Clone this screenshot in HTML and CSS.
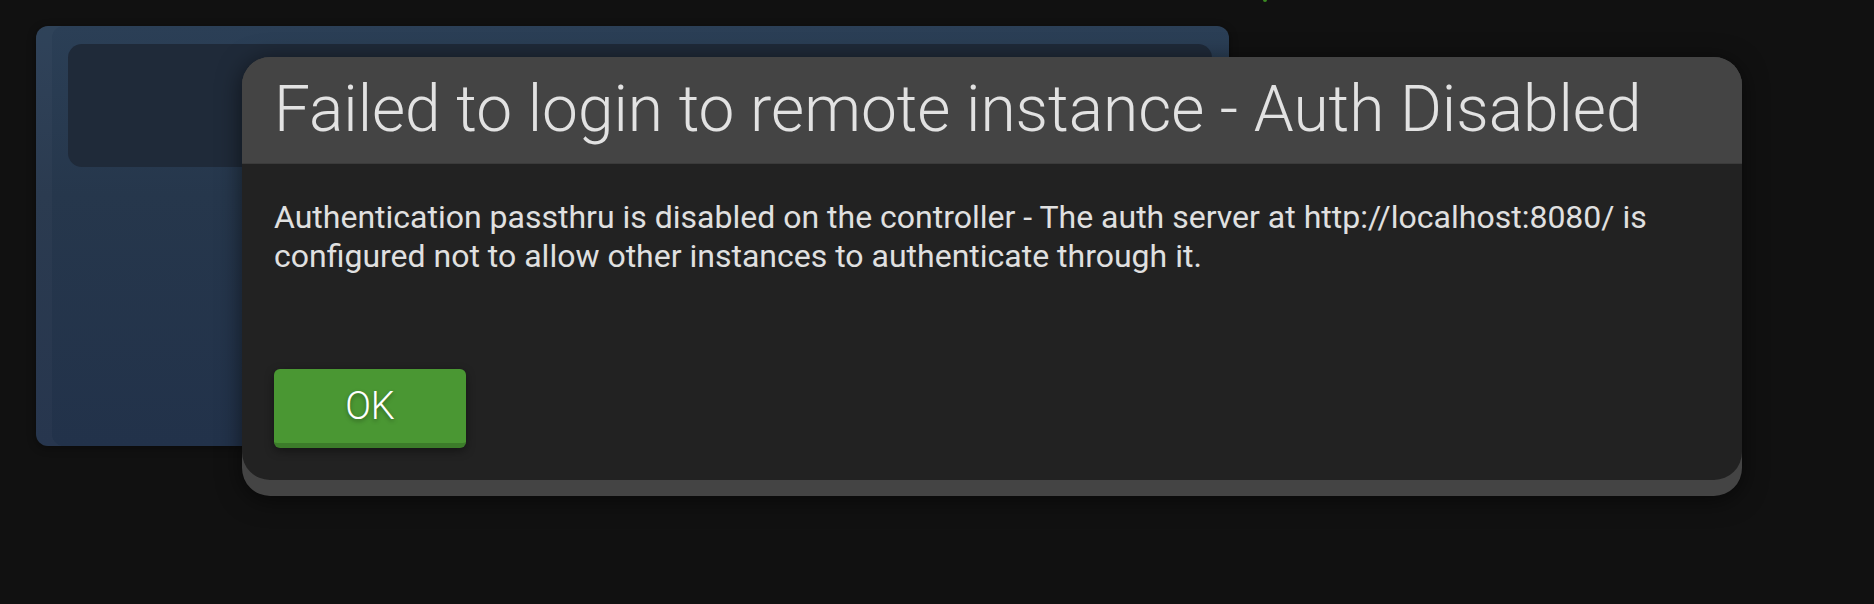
FILE: index.html
```html
<!DOCTYPE html>
<html lang="en">
<head>
<meta charset="utf-8">
<title>Auth Disabled</title>
<link rel="stylesheet" href="styles.css">
</head>
<body>
  <div class="stage">
    <div class="back-panel">
      <div class="back-inner"></div>
    </div>
    <span class="status-dot"></span>
    <div class="dialog" role="dialog">
      <div class="dialog-header">
        <h1 class="dialog-title">Failed to login to remote instance - Auth Disabled</h1>
      </div>
      <div class="dialog-body">
        <p class="dialog-message">Authentication passthru is disabled on the controller - The auth server at http://localhost:8080/ is configured not to allow other instances to authenticate through it.</p>
        <button class="btn-ok" type="button">OK</button>
      </div>
    </div>
  </div>
</body>
</html>
```

FILE: styles.css
```css
* { box-sizing: border-box; }

html, body {
  margin: 0;
  padding: 0;
  background: #111111;
  font-family: Roboto, "Noto Sans", "Liberation Sans", sans-serif;
  overflow: hidden;
}

.stage {
  position: relative;
  width: 1874px;
  height: 604px;
  padding: 26px 0 0 36px;
}

.back-panel {
  width: 1193px;
  height: 420px;
  border-radius: 12px;
  background: linear-gradient(180deg, #2b3f56 0%, #26374c 40%, #22324a 100%);
  box-shadow: inset 16px 0 0 rgba(255, 255, 255, 0.025), 0 2px 8px rgba(0, 0, 0, 0.4);
  padding: 18px 17px 0 32px;
}

.back-inner {
  height: 123px;
  border-radius: 14px;
  background: #1f2a39;
}

.status-dot {
  position: absolute;
  left: 1263px;
  top: -2px;
  width: 4px;
  height: 4px;
  border-radius: 50%;
  background: #3a8a22;
}

.dialog {
  position: absolute;
  left: 242px;
  top: 57px;
  width: 1500px;
  background: #444444;
  border-radius: 28px;
  padding-bottom: 16px;
  overflow: hidden;
  box-shadow: 0 4px 24px rgba(0, 0, 0, 0.55);
}

.dialog-header {
  padding: 16px 32px;
  border-bottom: 1px solid #3b3b3b;
  background: #444444;
}

.dialog-title {
  margin: 0;
  font-family: Roboto, "Noto Sans", sans-serif;
  font-weight: 300;
  font-size: 64px;
  line-height: 74px;
  color: #e2e2e2;
  white-space: nowrap;
}

.dialog-body {
  background: #222222;
  border-radius: 0 0 28px 28px;
  padding: 34px 32px 32px;
}

.dialog-message {
  margin: 0 0 93px;
  font-size: 32px;
  line-height: 39px;
  font-weight: 400;
  color: #e0e0e0;
}

.btn-ok {
  display: block;
  width: 192px;
  height: 79px;
  border: 0;
  border-bottom: 5px solid #3c7c2a;
  border-radius: 6px;
  background: #4a9733;
  color: #ffffff;
  font-family: Roboto, "Noto Sans", sans-serif;
  font-weight: 300;
  font-size: 38px;
  padding: 0;
  text-shadow: 0 2px 4px rgba(0, 0, 0, 0.35);
  box-shadow: 0 3px 10px rgba(0, 0, 0, 0.4);
  cursor: pointer;
}
```
